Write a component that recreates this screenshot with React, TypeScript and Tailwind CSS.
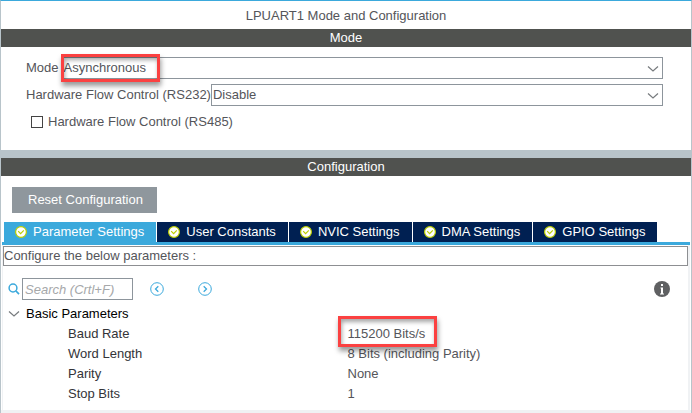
import { useState } from "react";
import type { ReactNode } from "react";

const tabs = [
  "Parameter Settings",
  "User Constants",
  "NVIC Settings",
  "DMA Settings",
  "GPIO Settings",
];

const parameters = [
  { name: "Baud Rate", value: "115200 Bits/s", marked: true },
  { name: "Word Length", value: "8 Bits (including Parity)" },
  { name: "Parity", value: "None" },
  { name: "Stop Bits", value: "1" },
];

function Chevron({ className }: { className?: string }) {
  return (
    <svg className={className} width="12" height="8" viewBox="0 0 12 8" fill="none" stroke="#777b7e" aria-hidden="true">
      <path d="M1 1.5 L6 6 L11 1.5" strokeWidth="1.2" />
    </svg>
  );
}

function CheckBadge() {
  return (
    <svg width="12" height="12" viewBox="0 0 12 12" aria-hidden="true">
      <circle cx="6" cy="6" r="5.4" fill="#fff" stroke="#bccf00" strokeWidth="1.2" />
      <path d="M3.2 5.2 L5.6 7.6 L8.8 4.4" fill="none" stroke="#bccf00" strokeWidth="1.2" />
    </svg>
  );
}

function Highlight({ className }: { className: string }) {
  return (
    <span
      className={`pointer-events-none absolute z-10 border-3 border-[#fb4141] shadow-[1px_4px_5px_rgba(0,0,0,0.4),inset_1px_3px_4px_rgba(0,0,0,0.35)] ${className}`}
    />
  );
}

function SectionBar({ children }: { children: ReactNode }) {
  return (
    <h2 className="h-[18px] bg-[#50524f] text-center leading-[18px] text-white">{children}</h2>
  );
}

function ModeSelect({ id, options, marked }: { id: string; options: string[]; marked?: boolean }) {
  return (
    <div className="relative flex-1">
      <select
        id={id}
        className="block h-[22px] w-full appearance-none border border-[#8d959c] bg-white px-px text-[#54555a]"
      >
        {options.map((o) => (
          <option key={o}>{o}</option>
        ))}
      </select>
      <Chevron className="pointer-events-none absolute top-2 right-1" />
      {marked && <Highlight className="-top-[3px] -left-px h-7 w-[99px]" />}
    </div>
  );
}

function Arrow({ d, label }: { d: string; label: string }) {
  return (
    <button type="button" aria-label={label}>
      <svg width="14" height="14" viewBox="0 0 14 14" fill="none" stroke="#3ba9dc" aria-hidden="true">
        <circle cx="7" cy="7" r="6.3" strokeWidth="1" />
        <path d={d} strokeWidth="1.3" />
      </svg>
    </button>
  );
}

export default function App() {
  const [active, setActive] = useState(0);
  return (
    <main className="flex min-h-screen flex-col border-x border-t border-x-[#b8c4ca] border-t-[#3ba9dc] bg-white font-['Liberation_Sans',Arial,sans-serif] text-[13px] leading-5 text-[#54555a]">
      <h1 className="h-7 text-center leading-[30px]">LPUART1 Mode and Configuration</h1>

      <section>
        <SectionBar>Mode</SectionBar>
        <div className="flex flex-col gap-[5px] pt-[10px] pr-7 pb-[17px] pl-[25px]">
          <div className="flex items-center gap-[3px]">
            <label htmlFor="mode">Mode</label>
            <ModeSelect id="mode" options={["Asynchronous", "Disable"]} marked />
          </div>
          <div className="flex items-center">
            <label htmlFor="rs232">Hardware Flow Control (RS232)</label>
            <ModeSelect id="rs232" options={["Disable", "CTS/RTS"]} />
          </div>
          <label className="flex h-[22px] items-center gap-[5px] pl-[5px]">
            <input
              type="checkbox"
              className="size-3 appearance-none border border-[#444] bg-white checked:bg-[#3ba9dc]"
            />
            Hardware Flow Control (RS485)
          </label>
        </div>
      </section>

      <section className="flex flex-1 flex-col border-t-8 border-[#b8c4ca]">
        <SectionBar>Configuration</SectionBar>
        <div className="px-[11px] pt-[11px] pb-[9px]">
          <button type="button" className="block h-[26px] bg-[#8f979d] pr-3.5 pl-4 text-white">
            Reset Configuration
          </button>
        </div>

        <div className="flex flex-1 flex-col border-b-3 border-[#f0f2f4] px-px">
          <div role="tablist" className="flex gap-px border-b-3 border-[#3ba9dc] pl-0.5">
            {tabs.map((t, i) => (
              <button
                key={t}
                type="button"
                role="tab"
                aria-selected={i === active}
                onClick={() => setActive(i)}
                className={`flex h-5 items-center gap-1.5 pr-3 pl-[11px] whitespace-nowrap text-white ${
                  i === active ? "bg-[#3ba9dc]" : "bg-[#002052]"
                }`}
              >
                <CheckBadge />
                {t}
              </button>
            ))}
          </div>

          <div className="flex flex-1 flex-col border-r-2 border-l border-[#f0f2f4] pt-px">
            <p className="h-5 border border-[#8d8f92] leading-[18px]">Configure the below parameters :</p>

            <div className="flex items-center pt-3 pr-[18px] pl-[5px]">
              <label htmlFor="search" aria-label="Search">
                <svg width="12" height="12" viewBox="0 0 12 12" fill="none" stroke="#3ba9dc" aria-hidden="true">
                  <circle cx="5" cy="5" r="3.9" strokeWidth="1.5" />
                  <path d="M8 8 L11 11.2" strokeWidth="1.7" />
                </svg>
              </label>
              <input
                id="search"
                type="text"
                placeholder="Search (Crtl+F)"
                className="ml-0.5 h-[22px] w-[111px] border border-[#8d959c] px-0.5 placeholder:text-[#a6a8aa] placeholder:italic"
              />
              <div className="ml-[17px] flex gap-[34px]">
                <Arrow label="Previous match" d="M8.3 4.2 L5.5 7 L8.3 9.8" />
                <Arrow label="Next match" d="M5.7 4.2 L8.5 7 L5.7 9.8" />
              </div>
              <button type="button" aria-label="Information" className="ml-auto">
                <svg width="16" height="16" viewBox="0 0 16 16" aria-hidden="true">
                  <circle cx="8" cy="8" r="8" fill="#5f6062" />
                  <path d="M7 3h2v2H7z M6.5 6.5H9V12.5h1v1H6v-1h1V7.5h-.5z" fill="#fff" />
                </svg>
              </button>
            </div>

            <table className="mt-1 w-full table-fixed text-left">
              <thead>
                <tr>
                  <th colSpan={2} className="h-5 p-0 font-normal text-black">
                    <button type="button" aria-expanded="true" className="flex items-center gap-1.5 pl-[5px]">
                      <Chevron />
                      Basic Parameters
                    </button>
                  </th>
                </tr>
              </thead>
              <tbody>
                {parameters.map((p) => (
                  <tr key={p.name}>
                    <th scope="row" className="h-5 w-1/2 p-0 pl-[65px] font-normal text-[#333438]">
                      {p.name}
                    </th>
                    <td className="h-5 p-0 pl-0.5">
                      <span className="relative inline-block">
                        {p.value}
                        {p.marked && <Highlight className="-top-2 -left-[10px] h-[31px] w-[99px]" />}
                      </span>
                    </td>
                  </tr>
                ))}
              </tbody>
            </table>
          </div>
        </div>
      </section>
    </main>
  );
}
